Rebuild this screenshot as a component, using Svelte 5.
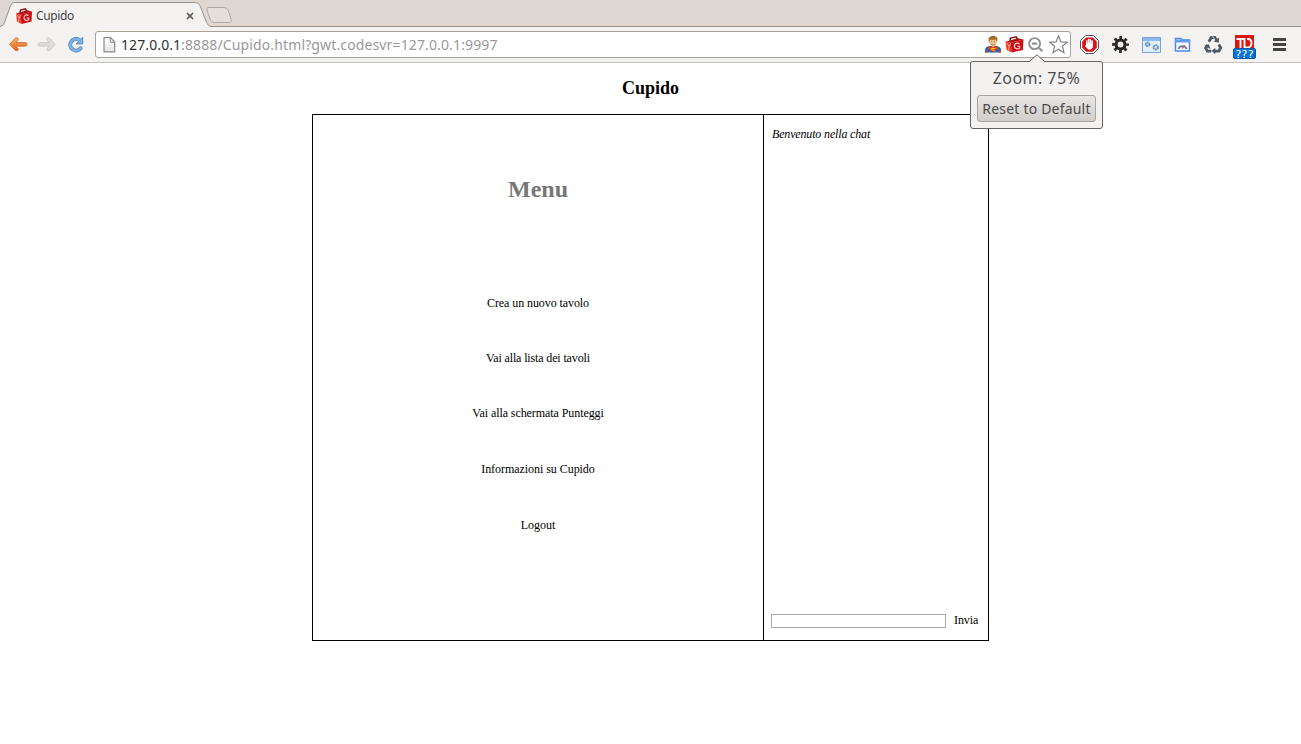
<script>
  const links = [
    { label: 'Crea un nuovo tavolo', tracking: -0.08 },
    { label: 'Vai alla lista dei tavoli', tracking: -0.14 },
    { label: 'Vai alla schermata Punteggi', tracking: -0.08 },
    { label: 'Informazioni su Cupido', tracking: -0.05 },
    { label: 'Logout', tracking: 0 }
  ];
</script>

{#snippet toolbox()}
  <path d="M4 4.500 4.500 2 9.500.8 10.500 3" fill="none" stroke="#8c1010" stroke-width="1.400" />
  <path d="M0 5.500 4.500 6.500 5.500 16 1 13.500Z" fill="#ef3a24" />
  <path d="M0 5.500 11 2.300 16 3.500 4.500 6.500Z" fill="#a90f12" />
  <path d="M4.500 6.500 16 3.500 15.500 13.500 5.500 16Z" fill="#cf0c12" />
  <path d="M.8 6.500 3.200 10 2.600 14M4.600 7 3.200 10" fill="none" stroke="#ffb4a0" stroke-width=".8" />
  <path d="M12.500 7.500C10 6 7.700 7.700 8 10.300 8.300 12.800 11.200 12.800 12.600 11.800V10H10.700" fill="none" stroke="#ffe4e0" stroke-width="1.100" />
{/snippet}

<div class="browser">
  <div class="tabs">
    <svg class="tabshape" width="240" height="28" viewBox="0 0 240 28">
      <path d="M0 26.500C3 26 4 24 5 21L10 7C11.500 3 13 2.500 16 2.500H194C198 2.500 199.500 4 201 8L206 21C207.500 25 209 26.500 212 26.500V28H0Z" fill="#f4f3f2" />
      <path d="M0 26.500C3 26 4 24 5 21L10 7C11.500 3 13 2.500 16 2.500H194C198 2.500 199.500 4 201 8L206 21C207.500 25 209 26.500 212 26.500H240" fill="none" stroke="#9b9189" />
      <path d="M209 7.500H223C226 7.500 227.500 8.500 228.500 11L231 19C232 21.500 231 22.500 229 22.500H215C212.500 22.500 211 21.500 210 19L207 10C206.500 8.500 207 7.500 209 7.500Z" fill="#e5dfda" stroke="#b3a9a1" />
    </svg>
    <svg class="fav" width="16" height="16" viewBox="0 0 16 16">{@render toolbox()}</svg>
    <span class="tabtitle">Cupido</span>
    <svg class="close" width="8" height="8" viewBox="0 0 8 8"><path d="m1 1 6 6M7 1 1 7" stroke="#555" stroke-width="1.700" /></svg>
  </div>

  <div class="toolbar">
    <svg width="20" height="34" viewBox="8 28 20 34">
      <defs><linearGradient id="orange" x2="0" y2="1"><stop stop-color="#f9b36e" /><stop offset="1" stop-color="#df6317" /></linearGradient></defs>
      <path d="M9.500 44.300 15.500 38Q18.500 37 18.300 39.500L16 42.500H25Q27 42.500 27 44.300T25 46.200H16L18.300 49Q18.500 51.500 15.500 50.600Z" fill="url(#orange)" stroke="#d66b28" stroke-width=".8" />
    </svg>
    <svg width="20" height="34" viewBox="37 28 20 34">
      <path d="M55.500 44.300 49.500 38Q46.500 37 46.700 39.500L49 42.500H40Q38 42.500 38 44.300T40 46.200H49L46.700 49Q46.500 51.500 49.500 50.600Z" fill="#dedcda" stroke="#cbc8c5" stroke-width=".8" />
    </svg>
    <svg width="20" height="34" viewBox="66 28 20 34">
      <path d="M79.500 40A5.800 5.800 0 1 0 80.600 48.300" fill="none" stroke="#5288c4" stroke-width="4" stroke-linecap="round" />
      <path d="M82.800 37.200V44H76L78.500 41.500 80.500 39.500Z" fill="#79aee1" stroke="#5288c4" stroke-width=".8" />
      <path d="M79.800 40.300A5.800 5.800 0 1 0 80.600 48.300" fill="none" stroke="#7db1e3" stroke-width="2.600" stroke-linecap="round" />
    </svg>
    <div class="omnibox">
      <svg class="page" width="13" height="16" viewBox="0 0 13 16">
        <defs><linearGradient id="paper" x2="0" y2="1"><stop stop-color="#fff" /><stop offset="1" stop-color="#e4e4e4" /></linearGradient></defs>
        <path d="M1 .7H7.500L11.700 5V14.800H1Z" fill="url(#paper)" stroke="#8a8a8a" stroke-width="1.200" />
        <path d="M7.300.8V5.300H11.500" fill="none" stroke="#8a8a8a" />
      </svg>
      <span class="url"><b>127.0.0.1</b><span>:8888/Cupido.html?gwt.codesvr=127.0.0.1:9997</span></span>
      <svg width="19" height="24" viewBox="984 32 19 24">
        <path d="M985 52.500V49.500Q985.500 46.500 989.500 46H996.500Q1000.500 46.500 1001 49.500V52.500Z" fill="#1267d0" />
        <path d="M988.500 46.500H997.500L998.500 48.500 993 52.500 987.500 48.500Z" fill="#e23d13" />
        <path d="M991.500 46H994.500L993 47.500Z" fill="#e7b277" />
        <path d="M995.500 48.500H991Q991 50 993 50T994 51.300" fill="none" stroke="#ffc21b" />
        <path d="M985 50.500H987.500V52.500H985ZM998.500 50.500H1001V52.500H998.500Z" fill="#d33c18" />
        <ellipse cx="993" cy="41.500" rx="3.800" ry="5" fill="#efc08a" />
        <path d="M989 42.500C987.500 38 989.500 36 993 36S998.500 38 997 42.500L996 39.500Q992 40 990.200 39.500Z" fill="#a5691f" />
        <path d="M991 44.500Q993 46 995 44.500M991 41.500H992M994 41.500H995" fill="none" stroke="#9a6535" stroke-width=".7" />
      </svg>
      <svg width="22" height="24" viewBox="1003 32 22 24"><g transform="translate(1005.500 36) scale(1.120 1.030)">{@render toolbox()}</g></svg>
      <svg width="22" height="24" viewBox="1025 32 22 24">
        <circle cx="1034.600" cy="43.600" r="5.500" fill="none" stroke="#929292" stroke-width="1.900" />
        <path d="M1032 43.600H1037.200M1038.800 47.800 1042.500 51.300" stroke="#929292" stroke-width="2.100" />
      </svg>
      <svg width="23" height="24" viewBox="1047 32 23 24">
        <path d="M1058.500 35.800 1060.900 41.800 1067.300 42.200 1062.400 46.300 1064 52.700 1058.500 49.200 1053 52.700 1054.600 46.300 1049.700 42.200 1056.100 41.800Z" fill="#fff" stroke="#808080" stroke-width="1.200" />
      </svg>
    </div>
    <svg class="first" width="31" height="34" viewBox="1074 28 31 34">
      <path d="M1085.500 35.500H1093.500L1098.500 40.500V48.500L1093.500 53.500H1085.500L1080.500 48.500V40.500Z" fill="#fff" stroke="#555" />
      <path d="M1086.200 37.500H1092.800L1096.800 41.500V47.800L1092.800 51.800H1086.200L1082.200 47.800V41.500Z" fill="#df1118" />
      <path d="M1086.800 46V41M1088.600 45V39.500M1090.400 45V39.800M1092.200 46V41" stroke="#fff" stroke-width="1.500" stroke-linecap="round" />
      <path d="M1086 43.500H1093V47L1091 49.500H1088L1085 46.200Q1085 45 1086 45.500Z" fill="#fff" />
    </svg>
    <svg width="31" height="34" viewBox="1105 28 31 34">
      <g fill="none" stroke="#272727"><circle cx="1120.500" cy="44.500" r="4.500" stroke-width="3.200" /><circle cx="1120.500" cy="44.500" r="7" stroke-width="2.800" stroke-dasharray="2.750 2.748" stroke-dashoffset="1.375" /></g>
    </svg>
    <svg width="31" height="34" viewBox="1136 28 31 34">
      <path d="M1142.500 37.500H1160.500V52.500H1142.500Z" fill="#e4effc" stroke="#7aa3dd" />
      <path d="M1143 38H1160V41H1143Z" fill="#8dbbf1" />
      <g fill="none" stroke="#648fbd" stroke-width="1.900"><circle cx="1147.700" cy="44.300" r="1.800" stroke-dasharray="1.800 .4" /><circle cx="1155.800" cy="47.300" r="2.200" stroke-dasharray="1.800 .4" /></g>
    </svg>
    <svg width="31" height="34" viewBox="1167 28 31 34">
      <path d="M1175.500 40V38.500H1181L1182.500 40H1189.500V51H1175.500Z" fill="#fff" stroke="#4e89e5" stroke-width="1.500" />
      <path d="M1175 39.500H1190V42.500H1175Z" fill="#649af0" />
      <path d="M1178.300 49A4.500 4.500 0 0 1 1186.700 49" fill="none" stroke="#5480b8" stroke-width="1.700" /><path d="m1182 48.500 3-3" stroke="#db573d" stroke-width="1.200" />
    </svg>
    <svg width="31" height="34" viewBox="1198 28 31 34">
      <g fill="none" stroke="#505962" stroke-width="2.900">
        <path d="m1208.800 41.800 2.500-4.300h3.500l1.800 3M1218.700 44.500l2 3.300-1.800 3.300h-4M1211.300 51.100h-3.900l-1.700-3 1.800-3" />
      </g>
      <path d="m1213.600 41.400 5.200 1.300 .2-5.200ZM1215.300 47.700v6.500l-3.700-3.200ZM1204.200 45.400l4.800-1.200 1.300 4.700Z" fill="#505962" />
      <path d="m1212.500 36 2.300 4" stroke="#f4f3f2" stroke-width=".7" />
    </svg>
    <svg width="31" height="34" viewBox="1229 28 31 34">
      <rect x="1235" y="35" width="19" height="15" rx=".5" fill="#d9160f" />
      <path d="M1236.500 39H1244.500V48M1240.500 39V48M1247 39H1248Q1251.500 39 1251.500 43T1248 47.500H1244" fill="none" stroke="#fff" stroke-width="1.900" />
      <rect x="1233.500" y="48.500" width="22" height="10" rx="1.500" fill="#0873d8" stroke="#0757ae" />
      <text class="badge" x="1244.500" y="57.500" text-anchor="middle" textLength="18">???</text>
    </svg>
    <svg width="39" height="34" viewBox="1260 28 39 34"><path d="M1273 39.500H1286M1273 44.500H1286M1273 49.500H1286" stroke="#444" stroke-width="2.800" /></svg>
  </div>

  <main>
    <h1>Cupido</h1>
    <div class="board">
      <section class="menu">
        <h2>Menu</h2>
        <nav>{#each links as link}<div class="link" style:letter-spacing="{link.tracking}px">{link.label}</div>{/each}</nav>
      </section>
      <section class="chat">
        <em>Benvenuto nella chat</em>
        <div class="send"><input aria-label="Messaggio" /><span>Invia</span></div>
      </section>
    </div>
  </main>

  <div class="popup">
    <svg class="arrow" width="18" height="9" viewBox="0 0 18 9"><path d="M0 8.500H1L9 .7 17 8.500V9H1Z" fill="#f3f2f1" /><path d="M0 7.500H1.500L9 .7 16.500 7.500H18" fill="none" stroke="#666" /></svg>
    <div class="zoomlevel">Zoom: 75%</div>
    <div class="reset">Reset to Default</div>
  </div>
</div>

<style>
  :global(body) { margin: 0; background: #fff; overflow: hidden; }
  .browser { position: relative; width: 1301px; height: 744px; background: #fff; overflow: hidden; font-family: "Noto Sans", sans-serif; }
  svg { display: block; flex: none; }
  .tabs { position: relative; display: flex; height: 27px; box-sizing: border-box; background: #dfd7d1; border-bottom: 1px solid #9b9189; }
  .tabshape { position: absolute; left: 0; top: 0; }
  .fav { position: relative; margin: 8px 4px 0 16px; }
  .tabtitle { position: relative; width: 150px; padding-top: 7px; font-size: 12px; line-height: 17px; color: #444; letter-spacing: -.35px; }
  .close { position: relative; margin-top: 12px; }
  .toolbar { display: flex; gap: 9px; box-sizing: border-box; height: 36px; padding: 1px 0 0 8px; background: #f4f3f2; border-bottom: 1px solid #c5c2be; }
  .omnibox { display: flex; flex: none; box-sizing: border-box; width: 976px; height: 27px; margin: 3px 0 0; border: 1px solid #aaa198; border-radius: 3px; background: #fff; align-items: flex-start; }
  .omnibox ~ svg { margin-left: -9px; }
  .omnibox ~ .first { margin-left: -6px; }
  .page { margin: 5px 5px 0 7px; }
  .url { flex: 1; font-size: 14px; line-height: 25px; color: #999; white-space: nowrap; }
  .url b { display: inline-block; width: 60px; font-weight: 400; color: #333; letter-spacing: .1px; }
  .url span { letter-spacing: .13px; }
  .badge { font: 11px "DejaVu Sans", sans-serif; fill: #fff; }
  main { font: 12px/14px "Liberation Serif", serif; color: #000; }
  h1 { margin: 0; padding-top: 14px; font-size: 18px; line-height: 22px; text-align: center; }
  .board { display: flex; box-sizing: border-box; width: 677px; height: 527px; margin: 15px auto 0; border: 1px solid #000; }
  .menu { box-sizing: border-box; width: 451px; border-right: 1px solid #000; text-align: center; }
  h2 { margin: 60px 0 0; font-size: 24px; line-height: 28px; color: #777; }
  nav { display: grid; grid-template-rows: 55px 55px 56px 56px 14px; margin-top: 93px; }
  .link { height: 14px; }
  .chat { display: flex; flex: 1; flex-direction: column; justify-content: space-between; padding: 12px 7px 12px 8px; }
  .chat em { letter-spacing: -.16px; }
  .send { display: flex; align-items: flex-start; gap: 8px; height: 14px; margin-left: -1px; }
  .send span { margin-top: -1px; letter-spacing: -.1px; }
  input { box-sizing: border-box; width: 175px; height: 14px; margin: 0; padding: 0; border: 1px solid #aaa; background: #fff; }
  .popup { position: absolute; left: 970px; top: 61px; box-sizing: border-box; width: 133px; height: 68px; border: 1px solid #666; border-radius: 3px; background: #f3f2f1; color: #4b4b4b; text-align: center; }
  .arrow { position: absolute; left: 57px; top: -8px; }
  .zoomlevel { padding-top: 5px; font-size: 16px; line-height: 22px; letter-spacing: .45px; }
  .reset { box-sizing: border-box; width: 119px; height: 27px; margin: 6px 0 0 6px; border: 1px solid #aaa39e; border-radius: 3px; background: linear-gradient(#e9e7e5, #d0cdca); font-size: 14px; line-height: 25px; letter-spacing: .2px; white-space: nowrap; }
</style>
